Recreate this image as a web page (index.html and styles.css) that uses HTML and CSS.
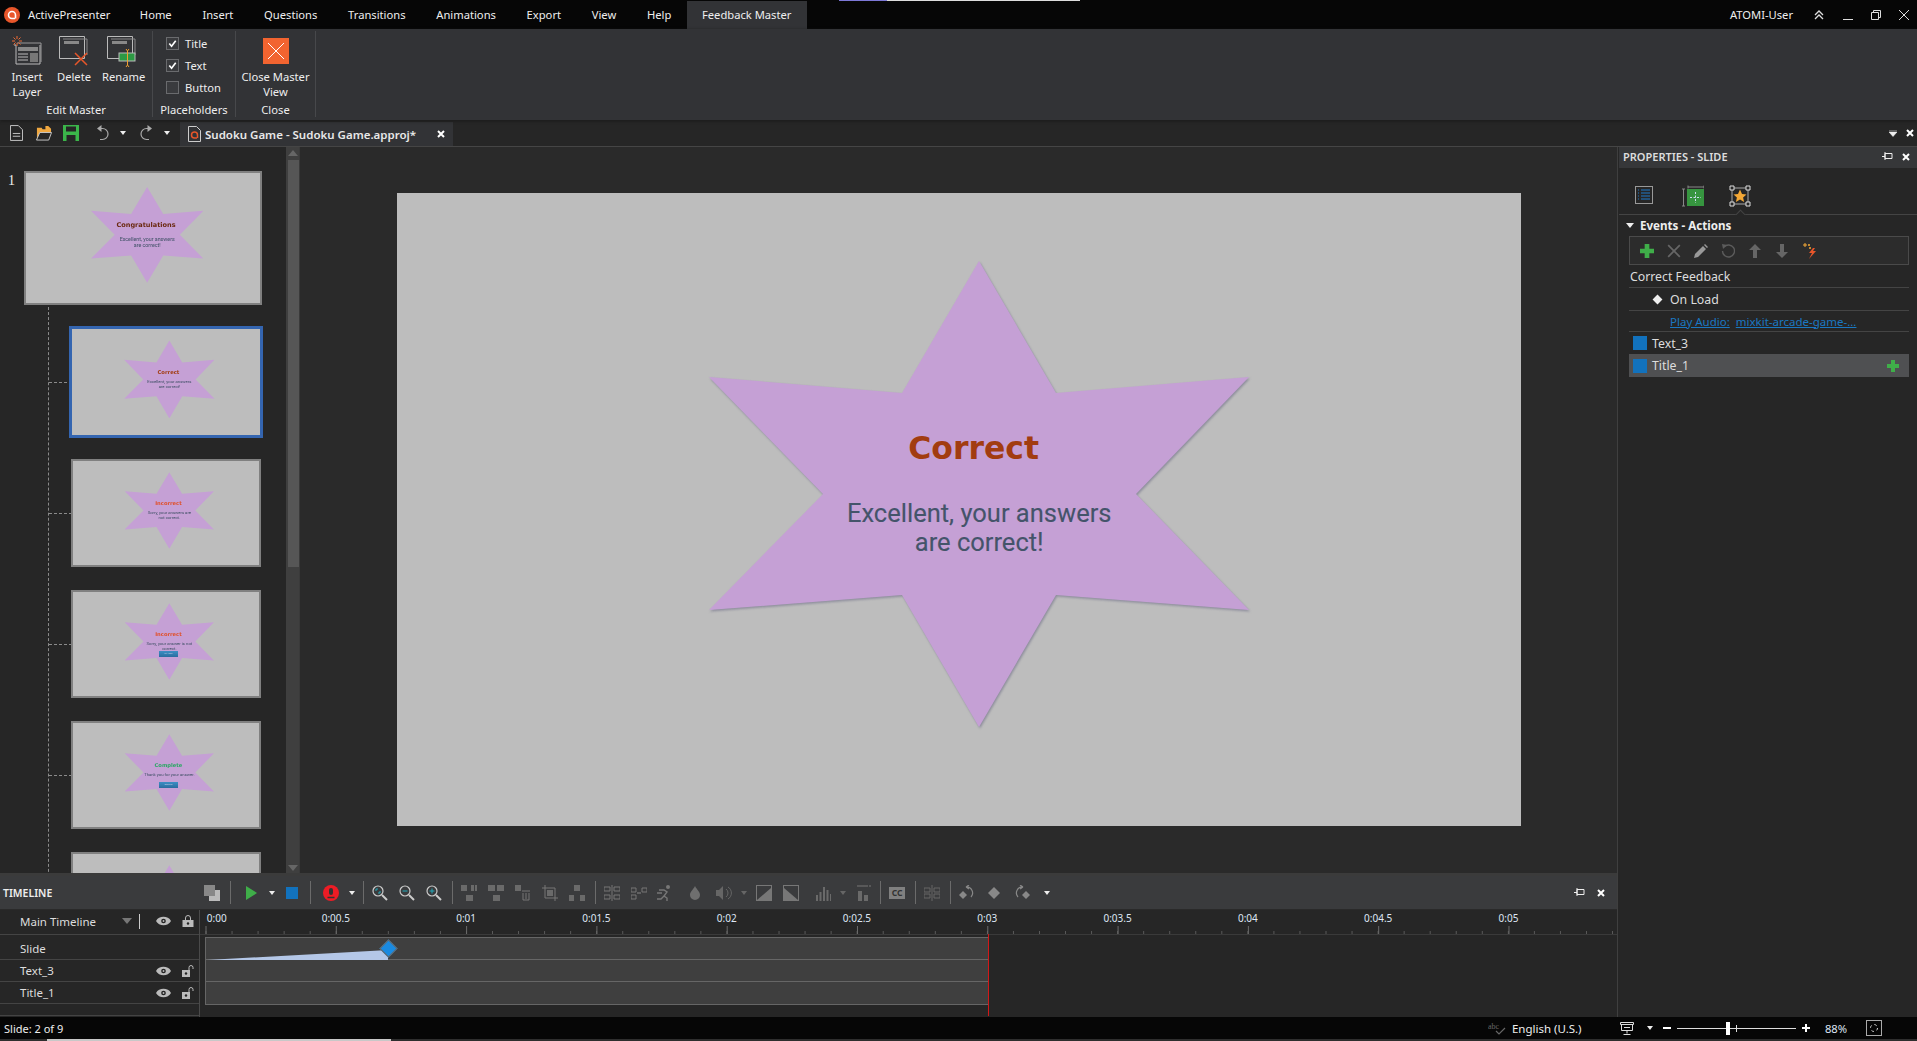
FILE: index.html
```html
<!DOCTYPE html>
<html lang="en">
<head>
  <meta charset="UTF-8">
  <title>ActivePresenter - Feedback Master</title>
  <link rel="stylesheet" href="styles.css">
</head>
<body>
  <div class="app">
    <div class="sliver"><span class="sliver-a"></span><span class="sliver-b"></span></div>

    <!-- Title bar -->
    <header class="titlebar">
      <svg class="logo" viewBox="0 0 16 16"><circle cx="8" cy="8" r="8" fill="#e8562a"/><path d="M11 11.5H8a3.5 3.5 0 1 1 3.5-3.5v3.5" fill="none" stroke="#fff" stroke-width="1.6"/></svg>
      <span class="app-name">ActivePresenter</span>
      <nav class="tabs">
        <span class="tab">Home</span>
        <span class="tab">Insert</span>
        <span class="tab">Questions</span>
        <span class="tab">Transitions</span>
        <span class="tab">Animations</span>
        <span class="tab">Export</span>
        <span class="tab">View</span>
        <span class="tab">Help</span>
        <span class="tab tab-active">Feedback Master</span>
      </nav>
      <span class="user">ATOMI-User</span>
      <svg class="win win-up" viewBox="0 0 10 10"><path d="M1 5l4-4 4 4M1 9l4-4 4 4" fill="none" stroke="#ddd" stroke-width="1.3"/></svg>
      <svg class="win win-min" viewBox="0 0 10 10"><path d="M0 9.5h10" stroke="#ddd"/></svg>
      <svg class="win win-max" viewBox="0 0 10 10"><path d="M.5 2.5h7v7h-7zM2.5 2.5v-2h7v7h-2" fill="none" stroke="#ddd"/></svg>
      <svg class="win win-close" viewBox="0 0 10 10"><path d="M0 0l10 10M10 0L0 10" stroke="#ddd"/></svg>
    </header>

    <!-- Ribbon -->
    <section class="ribbon">
      <div class="group group-edit">
        <div class="group-items">
          <div class="rb-btn rb-insert">
            <svg class="rb-icon" viewBox="0 0 30 30"><path d="M2 9h2v19h24V9" fill="none" stroke="#bbb"/><path d="M5 7h24v19" fill="none" stroke="#999"/><rect x="6" y="11" width="20" height="4" fill="#888"/><path d="M6 18h10M6 21h10M6 24h10" stroke="#bbb"/><rect x="18" y="17" width="8" height="9" fill="#777"/><path d="M5 0v3M5 7v3M0 5h3M7 5h3M1.5 1.5l2 2M6.5 6.5l2 2M8.5 1.5l-2 2M3.5 6.5l-2 2" stroke="#ee6a33"/></svg>
            <span>Insert<br>Layer</span>
          </div>
          <div class="rb-btn rb-delete">
            <svg class="rb-icon" viewBox="0 0 30 30"><path d="M.5 .5h25v22H.5z" fill="none" stroke="#bbb"/><path d="M4 3h24v16" fill="none" stroke="#888"/><rect x="5" y="5" width="15" height="3" fill="#888"/><path d="M16 17l12 12M28 17L16 29" stroke="#e8562a" stroke-width="1.5"/></svg>
            <span>Delete</span>
          </div>
          <div class="rb-btn rb-rename">
            <svg class="rb-icon" viewBox="0 0 30 30"><path d="M.5 .5h25v22H.5z" fill="none" stroke="#bbb"/><path d="M4 3h24v16" fill="none" stroke="#888"/><rect x="5" y="5" width="15" height="3" fill="#888"/><rect x="12" y="17" width="16" height="8" fill="#2d9a44" stroke="#bbb"/><path d="M19 13l1.5 2 1.5-2M20.5 15v14M19 31l1.5-2 1.5 2" fill="none" stroke="#f0a030"/></svg>
            <span>Rename</span>
          </div>
        </div>
        <div class="group-label">Edit Master</div>
      </div>
      <div class="group group-place">
        <div class="checks">
          <label class="check"><span class="box"><svg viewBox="0 0 12 12"><path d="M2.5 6l2.5 3 4.5-6" fill="none" stroke="#fff" stroke-width="1.8"/></svg></span>Title</label>
          <label class="check"><span class="box"><svg viewBox="0 0 12 12"><path d="M2.5 6l2.5 3 4.5-6" fill="none" stroke="#fff" stroke-width="1.8"/></svg></span>Text</label>
          <label class="check"><span class="box"></span>Button</label>
        </div>
        <div class="group-label">Placeholders</div>
      </div>
      <div class="group group-close">
        <div class="group-items">
          <div class="rb-btn rb-closeview">
            <svg class="rb-icon-close" viewBox="0 0 26 26"><rect width="26" height="26" fill="#f26430"/><path d="M5 5l16 16M21 5L5 21" stroke="#fff"/></svg>
            <span>Close Master<br>View</span>
          </div>
        </div>
        <div class="group-label">Close</div>
      </div>
    </section>

    <!-- Quick access and document tab -->
    <section class="docbar">
      <div class="quick">
        <svg class="qa qa-new" viewBox="0 0 14 17"><path d="M.5 .5H9L13.5 5v11.5H.5zM3 9h8M3 12h8" fill="none" stroke="#ccc"/></svg>
        <svg class="qa qa-open" viewBox="0 0 17 17"><path d="M1 14V3h5l1 1.5h3V1h3l3 3v4H5z" fill="#f0a840"/><path d="M.5 16L4 8h12.5l-3 8z" fill="#262626" stroke="#ccc"/></svg>
        <svg class="qa qa-save" viewBox="0 0 16 16"><path d="M0 0h16v16H0z" fill="#3bb54a"/><rect x="3" y="1.5" width="10" height="5" fill="#262626"/><rect x="3.5" y="10" width="9" height="6" fill="#262626"/></svg>
        <svg class="qa qa-undo" viewBox="0 0 12 16"><path d="M3 3.5h2.5a5.5 5.5 0 0 1 0 11H3" fill="none" stroke="#aaa" stroke-width="1.2"/><path d="M4.5 0v7L0 3.5z" fill="#aaa"/></svg>
        <i class="caret qa-caret1"></i>
        <svg class="qa qa-redo" viewBox="0 0 12 16"><path d="M9 3.5H6.5a5.5 5.5 0 0 0 0 11H9" fill="none" stroke="#aaa" stroke-width="1.2"/><path d="M7.5 0v7L12 3.5z" fill="#aaa"/></svg>
        <i class="caret qa-caret2"></i>
      </div>
      <div class="doctab">
        <svg class="doc-icon" viewBox="0 0 13 16"><path d="M.5 .5h8l4 4v11H.5z" fill="none" stroke="#ccc"/><path d="M9 12H6.5A3 3 0 1 1 9.5 9v3" fill="none" stroke="#e8562a" stroke-width="1.5"/></svg>
        <span class="doc-name">Sudoku Game - Sudoku Game.approj*</span>
        <svg class="x-icon doc-x" viewBox="0 0 8 8"><path d="M1 1l6 6M7 1L1 7" stroke="#fff" stroke-width="2"/></svg>
      </div>
      <div class="docbar-right">
        <svg class="dock-menu" viewBox="0 0 8 7"><path d="M0 0h8M0 2h8L4 6.5 0 2" fill="#eee" stroke="#eee" stroke-width=".6"/></svg>
        <svg class="x-icon" viewBox="0 0 8 8"><path d="M1 1l6 6M7 1L1 7" stroke="#fff" stroke-width="2"/></svg>
      </div>
    </section>

    <div class="workspace">
      <div class="work-left">
        <div class="work-top">

          <!-- Slide thumbnails -->
          <aside class="slides-panel">
            <div class="thumb-list">
              <div class="thumb-first">
                <span class="thumb-num">1</span>
                <div class="thumb thumb-main">
                  <div class="slide-art">
                    <div class="star"></div>
                    <div class="s-title s-dark">Congratulations</div>
                    <div class="s-body">Excellent, your answers<br>are correct!</div>
                  </div>
                </div>
              </div>
              <div class="thumb-tree">
                <div class="thumb-row thumb-row-sel">
                  <div class="thumb thumb-sel">
                    <div class="slide-art">
                      <div class="star"></div>
                      <div class="s-title s-brown">Correct</div>
                      <div class="s-body">Excellent, your answers<br>are correct!</div>
                    </div>
                  </div>
                </div>
                <div class="thumb-row">
                  <div class="thumb">
                    <div class="slide-art">
                      <div class="star"></div>
                      <div class="s-title s-red">Incorrect</div>
                      <div class="s-body">Sorry, your answers are<br>not correct.</div>
                    </div>
                  </div>
                </div>
                <div class="thumb-row">
                  <div class="thumb">
                    <div class="slide-art">
                      <div class="star"></div>
                      <div class="s-title s-red">Incorrect</div>
                      <div class="s-body">Sorry, your answer is not<br>correct.</div>
                      <div class="s-btn">Try Again</div>
                    </div>
                  </div>
                </div>
                <div class="thumb-row">
                  <div class="thumb">
                    <div class="slide-art">
                      <div class="star"></div>
                      <div class="s-title s-green">Complete</div>
                      <div class="s-body">Thank you for your answer.</div>
                      <div class="s-btn">Continue</div>
                    </div>
                  </div>
                </div>
                <div class="thumb-row">
                  <div class="thumb">
                    <div class="slide-art">
                      <div class="star"></div>
                    </div>
                  </div>
                </div>
              </div>
            </div>
            <div class="scrollbar">
              <i class="sb-up"></i>
              <div class="sb-thumb"></div>
              <i class="sb-down"></i>
            </div>
          </aside>

          <!-- Canvas -->
          <main class="canvas">
            <div class="big-slide">
              <div class="slide-art">
                <svg class="big-star" viewBox="0 0 540 466">
                  <polygon class="big-star-shadow" points="270,0 347,132 540,116 427,233 540,349 347,334 270,466 193,334 0,349 114,233 0,116 193,132"/>
                  <polygon class="big-star-fill" points="270,0 347,132 540,116 427,233 540,349 347,334 270,466 193,334 0,349 114,233 0,116 193,132"/>
                </svg>
                <div class="s-title s-brown">Correct</div>
                <div class="s-body">Excellent, your answers<br>are correct!</div>
              </div>
            </div>
          </main>
        </div>

        <!-- Timeline -->
        <section class="timeline">
          <div class="tl-head">
            <span class="tl-name">TIMELINE</span>
            <div class="tl-tools">
              <svg class="ti first" viewBox="0 0 16 16"><rect x="5" y="5" width="11" height="11" fill="#bbb"/><rect width="11" height="11" fill="#888"/></svg>
              <i class="tl-sep"></i>
              <svg class="ti ti-play" viewBox="0 0 11 14"><path d="M0 0v14l11-7z" fill="#3fae49"/></svg>
              <i class="caret m12"></i>
              <i class="stop"></i>
              <i class="tl-sep m12"></i>
              <svg class="ti m12" viewBox="0 0 16 16"><circle cx="8" cy="8" r="8" fill="#ee1c25"/><rect x="6" y="3" width="4" height="7" rx="2" fill="#333"/><path d="M4.5 12.5h7" stroke="#333" stroke-width="1.5"/></svg>
              <i class="caret m10"></i>
              <i class="tl-sep m8"></i>
              <svg class="ti" viewBox="0 0 16 16"><circle cx="6" cy="6" r="5" fill="none" stroke="#ccc" stroke-width="1.2"/><path d="M10 10l5 5" stroke="#ccc" stroke-width="2"/><path d="M4 6V4h2M8 6v2H6" fill="none" stroke="#2ab"/></svg>
              <svg class="ti" viewBox="0 0 16 16"><circle cx="6" cy="6" r="5" fill="none" stroke="#ccc" stroke-width="1.2"/><path d="M10 10l5 5" stroke="#ccc" stroke-width="2"/><path d="M3.5 6h5" stroke="#2ab"/></svg>
              <svg class="ti" viewBox="0 0 16 16"><circle cx="6" cy="6" r="5" fill="none" stroke="#ccc" stroke-width="1.2"/><path d="M10 10l5 5" stroke="#ccc" stroke-width="2"/><path d="M3.5 6h5M6 3.5v5" stroke="#2ab"/></svg>
              <i class="tl-sep"></i>
              <svg class="ti" viewBox="0 0 16 16"><path d="M0 0h6v6H0zM10 0h3v6h-3zM14 0h2v6h-2zM5 10h7v6H5z" fill="#6a6a6a"/></svg>
              <svg class="ti" viewBox="0 0 16 16"><path d="M0 0h7v6H0zM9 0h7v6H9zM5 10h7v6H5z" fill="#6a6a6a"/></svg>
              <svg class="ti" viewBox="0 0 16 16"><path d="M0 0h6v6H0z" fill="#6a6a6a"/><path d="M7 6h8M8 8v7h6V8M11 8v6" fill="none" stroke="#777"/></svg>
              <svg class="ti" viewBox="0 0 16 16"><path d="M3 0v13h13M0 3h13v13" fill="none" stroke="#777"/><rect x="5" y="5" width="6" height="6" fill="#6a6a6a"/></svg>
              <svg class="ti" viewBox="0 0 16 16"><path d="M5 0h6v6H5zM0 10h5v6H0zM11 10h5v6h-5z" fill="#6a6a6a"/></svg>
              <i class="tl-sep"></i>
              <svg class="ti" viewBox="0 0 16 16"><path d="M0 2h6v4H0zM0 10h6v4H0zM10 2h6v4h-6zM10 10h6v4h-6zM8 0v16" fill="none" stroke="#777"/></svg>
              <svg class="ti" viewBox="0 0 16 16"><path d="M0 3h5v4H0zM0 10h5v4H0zM11 3h5v4h-5z" fill="none" stroke="#777"/><path d="M6 8h4" stroke="#888"/></svg>
              <svg class="ti m10" viewBox="0 0 16 16"><circle cx="11" cy="2" r="2" fill="#777"/><path d="M2 5h5l3 2-3 4 3 2v3M7 11l-3 3H0M0 8h5" fill="none" stroke="#777" stroke-width="1.4"/></svg>
              <svg class="ti-drop" viewBox="0 0 10 14"><path d="M5 0c2 4 5 5.5 5 9a5 5 0 0 1-10 0c0-3.5 3-5 5-9z" fill="#6f6f6f"/></svg>
              <svg class="ti m16" viewBox="0 0 16 16"><path d="M0 5h3l4-4v14l-4-4H0z" fill="#666"/><path d="M10 4a5 5 0 0 1 0 8M12 2a7 7 0 0 1 0 12" fill="none" stroke="#666"/></svg>
              <i class="caret caret-dim m9"></i>
              <svg class="ti m9" viewBox="0 0 16 16"><rect x=".5" y=".5" width="15" height="15" fill="none" stroke="#777"/><path d="M1 15L15 3v12z" fill="#777"/></svg>
              <svg class="ti" viewBox="0 0 16 16"><rect x=".5" y=".5" width="15" height="15" fill="none" stroke="#777"/><path d="M1 3l14 12H1z" fill="#777"/></svg>
              <svg class="ti m16" viewBox="0 0 16 16"><path d="M1 10h2v6H1zM4.5 7h2v9h-2zM8 2h2v14H8zM11.5 5h2v11h-2zM15 9h1v7h-1z" fill="#6a6a6a"/></svg>
              <i class="caret caret-dim m9"></i>
              <svg class="ti m10" viewBox="0 0 16 16"><path d="M1 1h11M14 0v2" stroke="#777" fill="none"/><path d="M2 6h4v10H2zM8 10h4v6H8z" fill="#6a6a6a"/></svg>
              <i class="tl-sep m8"></i>
              <span class="cc">CC</span>
              <i class="tl-sep"></i>
              <svg class="ti" viewBox="0 0 16 16"><path d="M0 3h6v4H0zM0 9h6v4H0zM10 3h6v4h-6zM10 9h6v4h-6zM8 0v16" fill="none" stroke="#666"/></svg>
              <i class="tl-sep"></i>
              <svg class="ti" viewBox="0 0 16 16"><path d="M0 10l4-4 4 4-4 4z" fill="#888"/><path d="M7 2a6 6 0 0 1 5 10M7 2l3-2M7 2l3 2" fill="none" stroke="#888" stroke-width="1.2"/></svg>
              <svg class="ti m13" viewBox="0 0 16 16"><path d="M6 2l6 6-6 6-6-6z" fill="#888"/></svg>
              <svg class="ti m10" viewBox="0 0 16 16"><path d="M8 10l4-4 4 4-4 4z" fill="#888"/><path d="M9 2a6 6 0 0 0-5 10M9 2L6 0M9 2L6 4" fill="none" stroke="#888" stroke-width="1.2"/></svg>
              <i class="caret m14"></i>
            </div>
            <div class="tl-win">
              <svg class="pin" viewBox="0 0 12 9"><path d="M0 4.5h3M3 1.5h7v5H3zM3 0v8" fill="none" stroke="#eee"/></svg>
              <svg class="x-icon" viewBox="0 0 8 8"><path d="M1 1l6 6M7 1L1 7" stroke="#fff" stroke-width="2"/></svg>
            </div>
          </div>

          <div class="tl-body">
            <div class="tl-labels">
              <div class="tl-row tl-row-main">
                <span class="row-name">Main Timeline</span>
                <i class="tl-drop"></i>
                <i class="tl-mini-sep"></i>
                <svg class="eye" viewBox="0 0 16 10"><path d="M0 5c3-6 13-6 16 0-3 6-13 6-16 0z" fill="#bbb"/><circle cx="8" cy="5" r="2.5" fill="#222"/><circle cx="8" cy="5" r="1" fill="#bbb"/></svg>
                <svg class="lock" viewBox="0 0 11 12"><path d="M3 5V3a2.5 2.5 0 0 1 5 0v2" fill="none" stroke="#bbb"/><path d="M0 5h11v7H0z" fill="#bbb"/><circle cx="5.5" cy="8.5" r="1.2" fill="#222"/></svg>
              </div>
              <div class="tl-row tl-row-slide"><span class="row-name">Slide</span></div>
              <div class="tl-row">
                <span class="row-name">Text_3</span>
                <svg class="eye" viewBox="0 0 16 10"><path d="M0 5c3-6 13-6 16 0-3 6-13 6-16 0z" fill="#bbb"/><circle cx="8" cy="5" r="2.5" fill="#222"/><circle cx="8" cy="5" r="1" fill="#bbb"/></svg>
                <svg class="lock" viewBox="0 0 12 12"><path d="M7 5V2.5a2 2 0 0 1 4 0V4" fill="none" stroke="#bbb"/><path d="M0 5h8v7H0z" fill="#bbb"/><circle cx="4" cy="8.5" r="1.2" fill="#222"/></svg>
              </div>
              <div class="tl-row">
                <span class="row-name">Title_1</span>
                <svg class="eye" viewBox="0 0 16 10"><path d="M0 5c3-6 13-6 16 0-3 6-13 6-16 0z" fill="#bbb"/><circle cx="8" cy="5" r="2.5" fill="#222"/><circle cx="8" cy="5" r="1" fill="#bbb"/></svg>
                <svg class="lock" viewBox="0 0 12 12"><path d="M7 5V2.5a2 2 0 0 1 4 0V4" fill="none" stroke="#bbb"/><path d="M0 5h8v7H0z" fill="#bbb"/><circle cx="4" cy="8.5" r="1.2" fill="#222"/></svg>
              </div>
              <div class="tl-row tl-row-empty"></div>
            </div>
            <div class="tl-area">
              <div class="ruler">
                <span class="mark mark-first">0:00</span>
                <span class="mark">0:00.5</span>
                <span class="mark">0:01</span>
                <span class="mark">0:01.5</span>
                <span class="mark">0:02</span>
                <span class="mark">0:02.5</span>
                <span class="mark">0:03</span>
                <span class="mark">0:03.5</span>
                <span class="mark">0:04</span>
                <span class="mark">0:04.5</span>
                <span class="mark">0:05</span>
              </div>
              <div class="tracks">
                <div class="track track-slide">
                  <svg class="wedge" viewBox="0 0 190 24"><path d="M1 22L182 12v10z" fill="#b4c7e7"/></svg>
                  <i class="keyframe"></i>
                </div>
                <div class="track"></div>
                <div class="track"></div>
              </div>
              <i class="playhead"></i>
            </div>
          </div>
        </section>
      </div>

      <!-- Properties -->
      <aside class="props">
        <div class="props-head">
          <span>PROPERTIES - SLIDE</span>
          <div class="tl-win props-win">
            <svg class="pin" viewBox="0 0 12 9"><path d="M0 4.5h3M3 1.5h7v5H3zM3 0v8" fill="none" stroke="#eee"/></svg>
            <svg class="x-icon" viewBox="0 0 8 8"><path d="M1 1l6 6M7 1L1 7" stroke="#fff" stroke-width="2"/></svg>
          </div>
        </div>
        <div class="props-tabs">
          <svg class="pt pt-list" viewBox="0 0 18 18"><rect x=".5" y=".5" width="17" height="17" fill="none" stroke="#999"/><path d="M3 4h1M6 4h9M3 7h1M6 7h9M3 10h1M6 10h9M3 13h1M6 13h9" stroke="#1f78c8"/></svg>
          <svg class="pt pt-size" viewBox="0 0 22 22"><path d="M6 .5v3M22 .5v3M6 2h16M0 4h3M0 21h3M1.5 4v17" fill="none" stroke="#888"/><rect x="5" y="4" width="17" height="17" fill="#36953f"/><path d="M13.5 7v11M8 12.5h11" stroke="#cde" stroke-dasharray="2 1.5"/></svg>
          <svg class="pt pt-star" viewBox="0 0 22 22"><path d="M3 3h16v16H3z" fill="none" stroke="#aaa"/><path d="M1 1h4v4H1zM17 1h4v4h-4zM1 17h4v4H1zM17 17h4v4h-4z" fill="#262626" stroke="#ddd"/><path d="M11 4.5l2 4.5 4.5.4-3.400 3 1 4.600-4.100-2.400L6.900 17l1-4.600-3.400-3L9 9z" fill="#f4a836"/></svg>
          <i class="pt-notch"></i>
        </div>
        <div class="ev-head"><i class="ev-tri"></i>Events - Actions</div>
        <div class="ev-tools">
          <svg class="et" viewBox="0 0 12 12"><path d="M4 0h4v4h4v4H8v4H4V8H0V4h4z" fill="#3fae49"/></svg>
          <svg class="et" viewBox="0 0 12 12"><path d="M1 1l10 10M11 1L1 11" stroke="#666" stroke-width="1.5"/></svg>
          <svg class="et" viewBox="0 0 14 14"><path d="M0 14l1-4 8-8 3 3-8 8zM10 1l1-1 3 3-1 1z" fill="#999"/></svg>
          <svg class="et" viewBox="0 0 14 14"><path d="M3 3a6 6 0 1 1-1.5 4" fill="none" stroke="#5c5c5c" stroke-width="1.4"/><path d="M1 0l5 1-4 4z" fill="#5c5c5c"/></svg>
          <svg class="et" viewBox="0 0 12 14"><path d="M6 0l6 6H8v8H4V6H0z" fill="#666"/></svg>
          <svg class="et" viewBox="0 0 12 14"><path d="M4 0h4v8h4l-6 6-6-6h4z" fill="#666"/></svg>
          <svg class="et et-spark" viewBox="0 0 16 16"><path d="M11 5L7 10h3L7 16l7-8h-3l2-3z" fill="#e8562a"/><path d="M3 0v4M1 2h4M7 1v2M6 2h2M8 4v2M7 5h2" stroke="#f4a836"/></svg>
        </div>
        <div class="ev-line ev-name">Correct Feedback</div>
        <div class="ev-line ev-on"><i class="ev-diamond"></i>On Load</div>
        <div class="ev-line ev-act"><a class="lnk">Play Audio:</a><a class="lnk">mixkit-arcade-game-...</a></div>
        <div class="layer"><i class="swatch"></i>Text_3</div>
        <div class="layer layer-sel"><i class="swatch"></i>Title_1
          <svg class="layer-plus" viewBox="0 0 12 12"><path d="M4 0h4v4h4v4H8v4H4V8H0V4h4z" fill="#3fae49"/></svg>
        </div>
      </aside>
    </div>

    <!-- Status bar -->
    <footer class="status">
      <span class="st-left">Slide: 2 of 9</span>
      <svg class="st-abc" viewBox="0 0 18 14"><text x="0" y="8" class="abc-text">abc</text><path d="M8 10l3 3 6-6" fill="none" stroke="#666" stroke-width="1.2"/></svg>
      <span class="st-lang">English (U.S.)</span>
      <svg class="st-screen" viewBox="0 0 14 13"><path d="M.5 .5h13v2H.5zM1.5 2.5v6h11v-6M7 8.5v3M3.5 12.5h7M4 5.5h6" fill="none" stroke="#ddd"/></svg>
      <i class="caret st-caret"></i>
      <svg class="st-minus" viewBox="0 0 8 8"><path d="M0 4h8" stroke="#fff" stroke-width="2"/></svg>
      <div class="zoom-track"><i class="zoom-tick"></i><i class="zoom-thumb"></i></div>
      <svg class="st-plus" viewBox="0 0 8 8"><path d="M0 4h8M4 0v8" stroke="#fff" stroke-width="2"/></svg>
      <span class="st-zoom">88%</span>
      <svg class="st-fit" viewBox="0 0 16 16"><rect x=".5" y=".5" width="15" height="15" fill="none" stroke="#aaa"/><circle cx="8" cy="8" r="3.5" fill="none" stroke="#ddd" stroke-dasharray="2.5 3"/></svg>
    </footer>
    <div class="bottom-strip"><span></span></div>
  </div>
</body>
</html>
```
FILE: styles.css
```css
* { box-sizing: border-box; }

html, body {
  margin: 0;
  padding: 0;
  background: #262626;
}

body {
  font-family: "Noto Sans", "Open Sans", sans-serif;
  font-size: 11.2px;
  color: #eee;
}

i { display: block; }
svg { display: block; flex: none; }

.app {
  position: relative;
  width: 1917px;
  height: 1041px;
  display: flex;
  flex-direction: column;
  overflow: hidden;
}

/* top edge of a window behind */
.sliver {
  position: absolute;
  top: 0;
  left: 839px;
  height: 1px;
  display: flex;
  z-index: 2;
}
.sliver-a { width: 48px; background: #7d78d6; }
.sliver-b { width: 193px; background: #ddd; }

/* title bar */
.titlebar {
  height: 29px;
  background: #060606;
  display: flex;
  align-items: center;
  flex: none;
}
.logo { width: 16px; height: 16px; margin-left: 4px; }
.app-name { margin-left: 8px; width: 96.5px; white-space: nowrap; }
.tabs { display: flex; height: 28px; margin-top: 1px; }
.tab { padding: 0 15.35px; line-height: 27px; white-space: nowrap; }
.tab-active { background: #323336; }
.user { margin-left: auto; white-space: nowrap; }
.win { width: 10px; height: 10px; }
.win-up { margin-left: 21px; }
.win-min { margin-left: 19px; }
.win-max { margin-left: 18px; }
.win-close { margin-left: 18px; margin-right: 8px; }

/* ribbon */
.ribbon {
  height: 91px;
  background: #323336;
  display: flex;
  flex: none;
  padding-top: 2px;
  box-shadow: 0 1px 3px #1a1a1a;
  z-index: 1;
}
.group {
  height: 86px;
  border-right: 1px solid #47484b;
  display: flex;
  flex-direction: column;
  flex: none;
}
.group-edit { width: 153px; }
.group-place { width: 83px; }
.group-close { width: 80px; }
.group-items { display: flex; flex: 1; }
.group-label { height: 14px; line-height: 13px; text-align: center; white-space: nowrap; }
.rb-btn { text-align: center; line-height: 15px; white-space: nowrap; }
.rb-icon { width: 30px; height: 30px; margin: 5px auto 3px; overflow: visible; }
.rb-insert { margin-left: 7px; width: 40px; }
.rb-delete { margin-left: 7px; width: 40px; }
.rb-rename { margin-left: 8px; width: 40px; }
.rb-closeview { width: 80px; }
.rb-icon-close { width: 26px; height: 26px; margin: 7px auto 5px; }
.checks {
  flex: 1;
  padding: 5px 0 0 13px;
  display: flex;
  flex-direction: column;
  gap: 8px;
}
.check { display: flex; align-items: center; gap: 6px; height: 14px; }
.box {
  width: 13px;
  height: 13px;
  border: 1px solid #6a6b6e;
  background: #3a3b3e;
}

/* document bar */
.docbar {
  height: 27px;
  background: #262626;
  display: flex;
  flex: none;
  border-bottom: 1px solid #454545;
}
.quick { width: 180px; display: flex; align-items: center; }
.qa { height: 16px; }
.qa-new { width: 13px; margin-left: 10px; }
.qa-open { width: 16px; margin-left: 13px; }
.qa-save { width: 16px; margin-left: 11px; }
.qa-undo { width: 12px; margin-left: 18px; }
.qa-caret1 { margin-left: 11px; }
.qa-redo { width: 12px; margin-left: 14px; }
.qa-caret2 { margin-left: 12px; }
.caret {
  width: 0;
  height: 0;
  border-left: 3.5px solid transparent;
  border-right: 3.5px solid transparent;
  border-top: 4px solid #eee;
  flex: none;
}
.caret-dim { border-top-color: #666; }
.doctab {
  width: 273px;
  margin-top: 2px;
  background: #323336;
  display: flex;
  align-items: center;
}
.doc-icon { width: 13px; height: 16px; margin-left: 8px; }
.doc-name { margin-left: 4px; font-weight: 600; white-space: nowrap; font-size: 11.5px; color: #e8e8e8; }
.doc-x { margin-left: auto; margin-right: 8px; }
.x-icon { width: 8px; height: 8px; }
.docbar-right { margin-left: auto; display: flex; align-items: center; gap: 9px; padding-right: 3px; }
.dock-menu { width: 8px; height: 7px; }

/* work area */
.workspace { flex: 1; display: flex; min-height: 0; }
.work-left { width: 1618px; display: flex; flex-direction: column; border-right: 1px solid #3f3f3f; }
.work-top { height: 726px; display: flex; flex: none; }

.slides-panel { width: 300px; display: flex; border-right: 1px solid #3a3a3a; background: #262626; overflow: hidden; }
.thumb-list { width: 286px; padding-top: 24px; }
.thumb-first { display: flex; height: 134px; }
.thumb-num {
  font-family: "Liberation Serif", serif;
  font-size: 14px;
  width: 24px;
  padding-left: 8px;
  line-height: 20px;
}
.thumb {
  width: 190px;
  height: 108px;
  border: 2px solid #808080;
  background: #bdbdbd;
  container-type: inline-size;
  flex: none;
}
.thumb-main { width: 238px; height: 134px; }
.thumb-tree {
  margin-left: 48px;
  margin-top: 2px;
  padding-top: 19px;
  height: 600px;
  border-left: 1px dashed #8a8a8a;
  display: flex;
  flex-direction: column;
  gap: 23px;
}
.thumb-row {
  height: 108px;
  flex: none;
  display: flex;
  align-items: center;
  padding-left: 22px;
  background: repeating-linear-gradient(90deg, #8a8a8a 0 3px, transparent 3px 5px) 0 50% / 22px 1px no-repeat;
}
.thumb-row-sel { height: 112px; padding-left: 20px; margin-bottom: -2px; }
.thumb-sel { width: 194px; height: 112px; border: 3px solid #3465b0; }

.scrollbar { width: 13px; background: #3f3f3f; display: flex; flex-direction: column; align-items: center; }
.sb-up {
  margin-top: 3px;
  width: 0;
  border-left: 5px solid transparent;
  border-right: 5px solid transparent;
  border-bottom: 6px solid #666;
}
.sb-thumb { width: 11px; height: 407px; margin-top: 4px; margin-left: 1px; background: #565656; }
.sb-down {
  margin-top: auto;
  margin-bottom: 2px;
  width: 0;
  border-left: 5px solid transparent;
  border-right: 5px solid transparent;
  border-top: 6px solid #666;
}

/* slide drawing, shared by canvas and thumbnails */
.slide-art { position: relative; width: 100%; height: 100%; filter: blur(.35px); }
.star {
  position: absolute;
  left: 27.76%;
  top: 10.74%;
  width: 48.04%;
  height: 73.6%;
  background: #c5a0d5;
  clip-path: polygon(50% 0, 64.3% 28.3%, 100% 24.9%, 79.1% 50%, 100% 74.9%, 64.3% 71.7%, 50% 100%, 35.7% 71.7%, 0 74.9%, 21.1% 50%, 0 24.9%, 35.7% 28.3%);
}
.s-title {
  position: absolute;
  left: 2.6%;
  right: 0;
  top: 40.3%;
  transform: translateY(-50%);
  text-align: center;
  font-family: "DejaVu Sans", sans-serif;
  font-weight: 700;
  font-size: 2.8cqw;
  white-space: nowrap;
}
.s-dark { color: #6b2a12; }
.s-brown { color: #a23c10; }
.s-red { color: #e0502a; }
.s-green { color: #2aa864; }
.s-body {
  position: absolute;
  left: 3.6%;
  right: 0;
  top: 48.4%;
  text-align: center;
  font-family: Roboto, sans-serif;
  font-weight: 400;
  color: #44546a;
  font-size: 2.27cqw;
  line-height: 2.58cqw;
  white-space: nowrap;
  -webkit-text-stroke: .01cqw currentColor;
}
.s-btn {
  position: absolute;
  left: 46.3%;
  top: 56.6%;
  width: 10%;
  height: 6.2%;
  background: linear-gradient(#3d8fc4, #2b6d9f);
  color: #dde;
  font-size: 1cqw;
  line-height: 3.3cqw;
  text-align: center;
  white-space: nowrap;
}

/* canvas */
.canvas {
  flex: 1;
  background: #2a2a2a;
  display: flex;
  justify-content: center;
  padding: 46px 0 0 1px;
}
.big-slide {
  width: 1124px;
  height: 633px;
  background: #bdbdbd;
  container-type: inline-size;
}
.big-slide .slide-art { filter: none; }
.big-star {
  position: absolute;
  left: 312px;
  top: 68px;
  width: 540px;
  height: 466px;
  overflow: visible;
}
.big-star-shadow { fill: #8d8d9c; transform: translate(1px, 1.5px); filter: blur(1px); }
.big-star-fill { fill: #c5a0d5; }

/* timeline */
.timeline { flex: 1; min-height: 0; background: #262626; display: flex; flex-direction: column; border-top: 3px solid #3b3b3b; }
.tl-head {
  height: 34px;
  background: #3a3b3d;
  display: flex;
  align-items: center;
  flex: none;
  border-bottom: 1px solid #2a2a2a;
}
.tl-name { margin-left: 3px; width: 201px; font-size: 10.5px; font-weight: 600; flex: none; }
.tl-tools { display: flex; align-items: center; }
.tl-tools > * { margin-left: 11px; }
.tl-tools > .first { margin-left: 0; }
.tl-tools > .tl-sep { margin-left: 10px; }
.tl-tools > .tl-sep + * { margin-left: 8px; }
.tl-tools > .m8 { margin-left: 8px; }
.tl-tools > .m9 { margin-left: 9px; }
.tl-tools > .m10 { margin-left: 10px; }
.tl-tools > .m12 { margin-left: 12px; }
.tl-tools > .m13 { margin-left: 13px; }
.tl-tools > .m14 { margin-left: 14px; }
.tl-tools > .m16 { margin-left: 16px; }
.tl-tools > .ti-play { margin-left: 15px; }
.tl-sep { width: 1px; height: 23px; background: #6b6b6b; flex: none; }
.ti { width: 16px; height: 16px; }
.ti-play { width: 11px; height: 14px; }
.ti-drop { width: 10px; height: 14px; margin-left: 17px; }
.stop { width: 12px; height: 12px; background: #1272bd; flex: none; }
.cc {
  width: 16px;
  background: #808080;
  color: #333;
  font-size: 8.5px;
  font-weight: 700;
  line-height: 12px;
  text-align: center;
}
.tl-win { margin-left: auto; display: flex; align-items: center; gap: 11px; padding-right: 12px; }
.props-win { gap: 8px; padding-right: 7px; }
.pin { width: 12px; height: 9px; }

.tl-body { flex: 1; display: flex; min-height: 0; }
.tl-labels { width: 200px; border-right: 1px solid #4a4a4a; }
.tl-row {
  height: 22px;
  display: flex;
  align-items: center;
  border-bottom: 1px solid #444;
  padding-left: 20px;
}
.tl-row-main { height: 25px; padding-bottom: 2px; }
.tl-row-slide { height: 25px; padding-top: 3px; }
.tl-row-empty { height: 12px; }
.row-name { width: 136px; color: #ddd; white-space: nowrap; font-size: 11.5px; }
.tl-row .eye { width: 15px; height: 10px; }
.tl-row .lock { width: 12px; height: 12px; margin-left: 11px; }
.tl-row-main .row-name { width: 102px; }
.tl-drop {
  width: 0;
  border-left: 5px solid transparent;
  border-right: 5px solid transparent;
  border-top: 6px solid #777;
}
.tl-mini-sep { width: 1px; height: 15px; background: #ccc; margin: 0 16px 0 7px; }

.tl-area { flex: 1; position: relative; overflow: hidden; min-width: 0; }
.ruler {
  height: 25px;
  display: flex;
  padding-left: 5.5px;
  font-size: 10px;
  color: #dfe7f5;
  border-bottom: 1px solid #3a3a3a;
  background:
    linear-gradient(90deg, #6a6a6a 1px, transparent 1px) 5.5px 16px / 130.3px 8px repeat-x,
    linear-gradient(90deg, #5a5a5a 1px, transparent 1px) 5.5px 21px / 26.06px 3px repeat-x;
}
.mark { width: 130.3px; flex: none; text-align: center; line-height: 16px; transform: translateX(-65.15px); }
.mark-first { text-align: right; padding-right: 44px; }
.tracks {
  margin: 2px 0 0 5px;
  width: 784px;
  border: 1px solid #666;
  background: #3f3f3f;
}
.track { height: 22px; border-bottom: 1px solid #666; position: relative; }
.track:last-child { border-bottom: 0; }
.wedge { position: absolute; left: 0; top: 0; width: 190px; height: 24px; }
.keyframe {
  position: absolute;
  left: 176px;
  top: 4px;
  width: 13px;
  height: 13px;
  background: #1a8ae0;
  border: 1px solid #666;
  transform: rotate(45deg);
}
.playhead { position: absolute; left: 788px; top: 24px; width: 1px; height: 82px; background: #d01818; }

/* properties */
.props { flex: 1; min-width: 0; background: #262626; padding-left: 1px; font-size: 12.3px; }
.props-head {
  height: 21px;
  background: #363739;
  display: flex;
  align-items: center;
  padding: 0 0 2px 4px;
  font-size: 11px;
  font-weight: 600;
  color: #ddd;
}
.props-tabs {
  position: relative;
  height: 47px;
  display: flex;
  align-items: flex-start;
  padding: 18px 0 0 16px;
  border-bottom: 1px solid #444;
}
.pt { width: 18px; height: 18px; }
.pt-size { width: 22px; height: 22px; margin: -1px 0 0 29px; }
.pt-star { width: 22px; height: 22px; margin: -1px 0 0 25px; }
.pt-notch {
  position: absolute;
  left: 118px;
  bottom: -4px;
  width: 7px;
  height: 7px;
  background: #262626;
  border-left: 1px solid #444;
  border-top: 1px solid #444;
  transform: rotate(45deg);
}
.ev-head {
  display: flex;
  align-items: center;
  height: 21px;
  font-weight: 700;
  font-size: 11.6px;
  padding-left: 7px;
}
.ev-tri {
  width: 0;
  margin-right: 6px;
  border-left: 4.5px solid transparent;
  border-right: 4.5px solid transparent;
  border-top: 5px solid #eee;
}
.ev-tools {
  margin-left: 10px;
  width: 280px;
  height: 29px;
  background: #2c2c2c;
  border: 1px solid #4a4a4a;
  display: flex;
  align-items: center;
  padding-left: 10px;
  gap: 13px;
}
.et { width: 14px; height: 14px; }
.et-spark { width: 16px; height: 16px; }
.ev-line {
  margin-left: 10px;
  width: 280px;
  height: 23px;
  border-bottom: 1px solid #444;
  display: flex;
  align-items: center;
  white-space: nowrap;
  color: #ddd;
}
.ev-name { padding: 1px 0 0 1px; }
.ev-on { padding-left: 25px; }
.ev-diamond { width: 7px; height: 7px; background: #eee; transform: rotate(45deg); margin-right: 9px; }
.ev-act { height: 21px; padding-left: 41px; gap: 6px; }
.lnk { color: #1a78c2; text-decoration: underline; font-size: 11.5px; }
.layer {
  margin-left: 10px;
  width: 280px;
  height: 22px;
  padding-left: 4px;
  display: flex;
  align-items: center;
  color: #ddd;
}
.swatch { width: 14px; height: 14px; background: #1272bd; margin-right: 5px; }
.layer-sel { background: #4f5052; height: 23px; }
.layer-plus { width: 12px; height: 12px; margin-left: auto; margin-right: 10px; }

/* status bar */
.status {
  height: 22px;
  background: #060606;
  display: flex;
  align-items: center;
  flex: none;
}
.st-left { margin-left: 4px; font-size: 11px; }
.st-abc { margin-left: auto; width: 18px; height: 14px; }
.abc-text { font-family: "Liberation Serif", serif; font-size: 8px; fill: #666; }
.st-lang { margin-left: 6px; width: 108px; white-space: nowrap; font-size: 11.5px; }
.st-screen { width: 14px; height: 13px; }
.st-caret { margin-left: 13px; }
.st-minus { width: 8px; height: 8px; margin-left: 10px; }
.zoom-track { position: relative; width: 119px; height: 1px; background: #ddd; margin-left: 6px; }
.zoom-tick { position: absolute; left: 59px; top: -3px; width: 1px; height: 7px; background: #ddd; }
.zoom-thumb { position: absolute; left: 49px; top: -6px; width: 4px; height: 13px; background: #fff; }
.st-plus { width: 8px; height: 8px; margin-left: 6px; }
.st-zoom { margin-left: 15px; color: #dfe7f5; }
.st-fit { width: 16px; height: 16px; margin-left: 19px; margin-right: 35px; }

.bottom-strip { height: 2px; background: #2e2e2e; flex: none; padding-left: 47px; }
.bottom-strip span { display: block; width: 344px; height: 2px; background: #c8c8c8; }
```
